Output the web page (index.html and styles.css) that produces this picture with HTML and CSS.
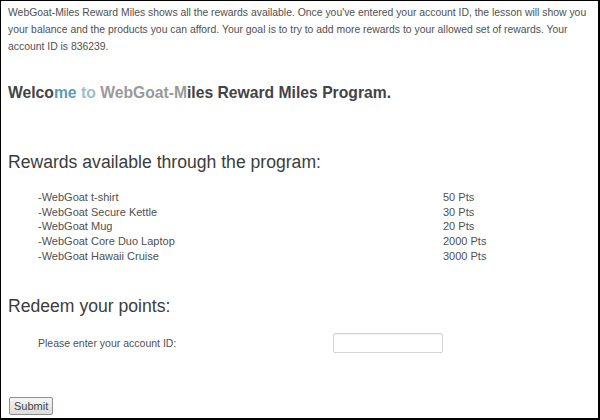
FILE: index.html
```html
<!DOCTYPE html>
<html lang="en">
<head>
    <meta charset="UTF-8">
    <title>WebGoat-Miles</title>
    <link rel="stylesheet" href="styles.css">
</head>
<body>
    <div class="lesson">
        <p class="intro">WebGoat-Miles Reward Miles shows all the rewards available. Once you've entered your account ID, the lesson will show you your balance and the products you can afford. Your goal is to try to add more rewards to your allowed set of rewards. Your account ID is 836239.</p>

        <h1 class="welcome">Welco<span class="blur-a">me</span> <span class="blur-b">to</span> <span class="blur-c">WebGoat-M</span>iles Reward Miles Program.</h1>

        <h2 class="section">Rewards available through the program:</h2>

        <div class="rewards">
            <span>-WebGoat t-shirt</span><span>50 Pts</span>
            <span>-WebGoat Secure Kettle</span><span>30 Pts</span>
            <span>-WebGoat Mug</span><span>20 Pts</span>
            <span>-WebGoat Core Duo Laptop</span><span>2000 Pts</span>
            <span>-WebGoat Hawaii Cruise</span><span>3000 Pts</span>
        </div>

        <h2 class="section redeem">Redeem your points:</h2>

        <form class="redeem-form" onsubmit="return false;">
            <div class="field">
                <label for="account">Please enter your account ID:</label>
                <input id="account" type="text">
            </div>
            <button type="submit" class="submit">Submit</button>
        </form>
    </div>
</body>
</html>
```

FILE: styles.css
```css
html, body {
    height: 100%;
}

body {
    margin: 0;
    box-sizing: border-box;
    border-style: solid;
    border-color: #000;
    border-width: 1px 2px 2px 1px;
    background-color: #fff;
    font-family: "Liberation Sans", Arial, sans-serif;
    color: #4a4a4a;
}

.lesson {
    padding: 3px 7px 0 7px;
}

.intro {
    margin: 0;
    font-size: 10.4px;
    line-height: 17px;
    color: #505050;
}

.welcome {
    margin: 28px 0 0 0;
    font-size: 15.7px;
    line-height: 20px;
    font-weight: bold;
    color: #444;
}

/* la parte "borrosa" del título */
.blur-a {
    color: #5c9cb6;
}

.blur-b {
    color: #9cbfcc;
}

.blur-c {
    color: #9a9a9a;
}

.section {
    margin: 47px 0 0 0;
    font-size: 17.6px;
    line-height: 24px;
    font-weight: normal;
    color: #3c3c3c;
}

.rewards {
    display: grid;
    grid-template-columns: 405px auto;
    margin: 16px 0 0 30px;
    font-size: 11px;
    line-height: 14.7px;
    color: #505050;
}

.redeem {
    margin-top: 30.5px;
}

.field {
    display: flex;
    align-items: center;
    margin: 15px 0 0 30px;
    font-size: 10.5px;
    color: #505050;
}

.field label {
    width: 295px;
}

.field input {
    width: 110px;
    height: 20px;
    box-sizing: border-box;
    border: 1px solid #d4d4d4;
    border-radius: 2px;
    box-shadow: inset 0 1px 1px rgba(0, 0, 0, 0.06);
}

.submit {
    display: block;
    margin: 44px 0 0 1px;
    height: 18px;
    padding: 0 4px;
    font-family: "Liberation Sans", Arial, sans-serif;
    font-size: 11px;
    color: #444;
    border: 1px solid #8f8f8f;
    border-radius: 2px;
    background: linear-gradient(#f6f6f6, #dcdcdc);
}
```
